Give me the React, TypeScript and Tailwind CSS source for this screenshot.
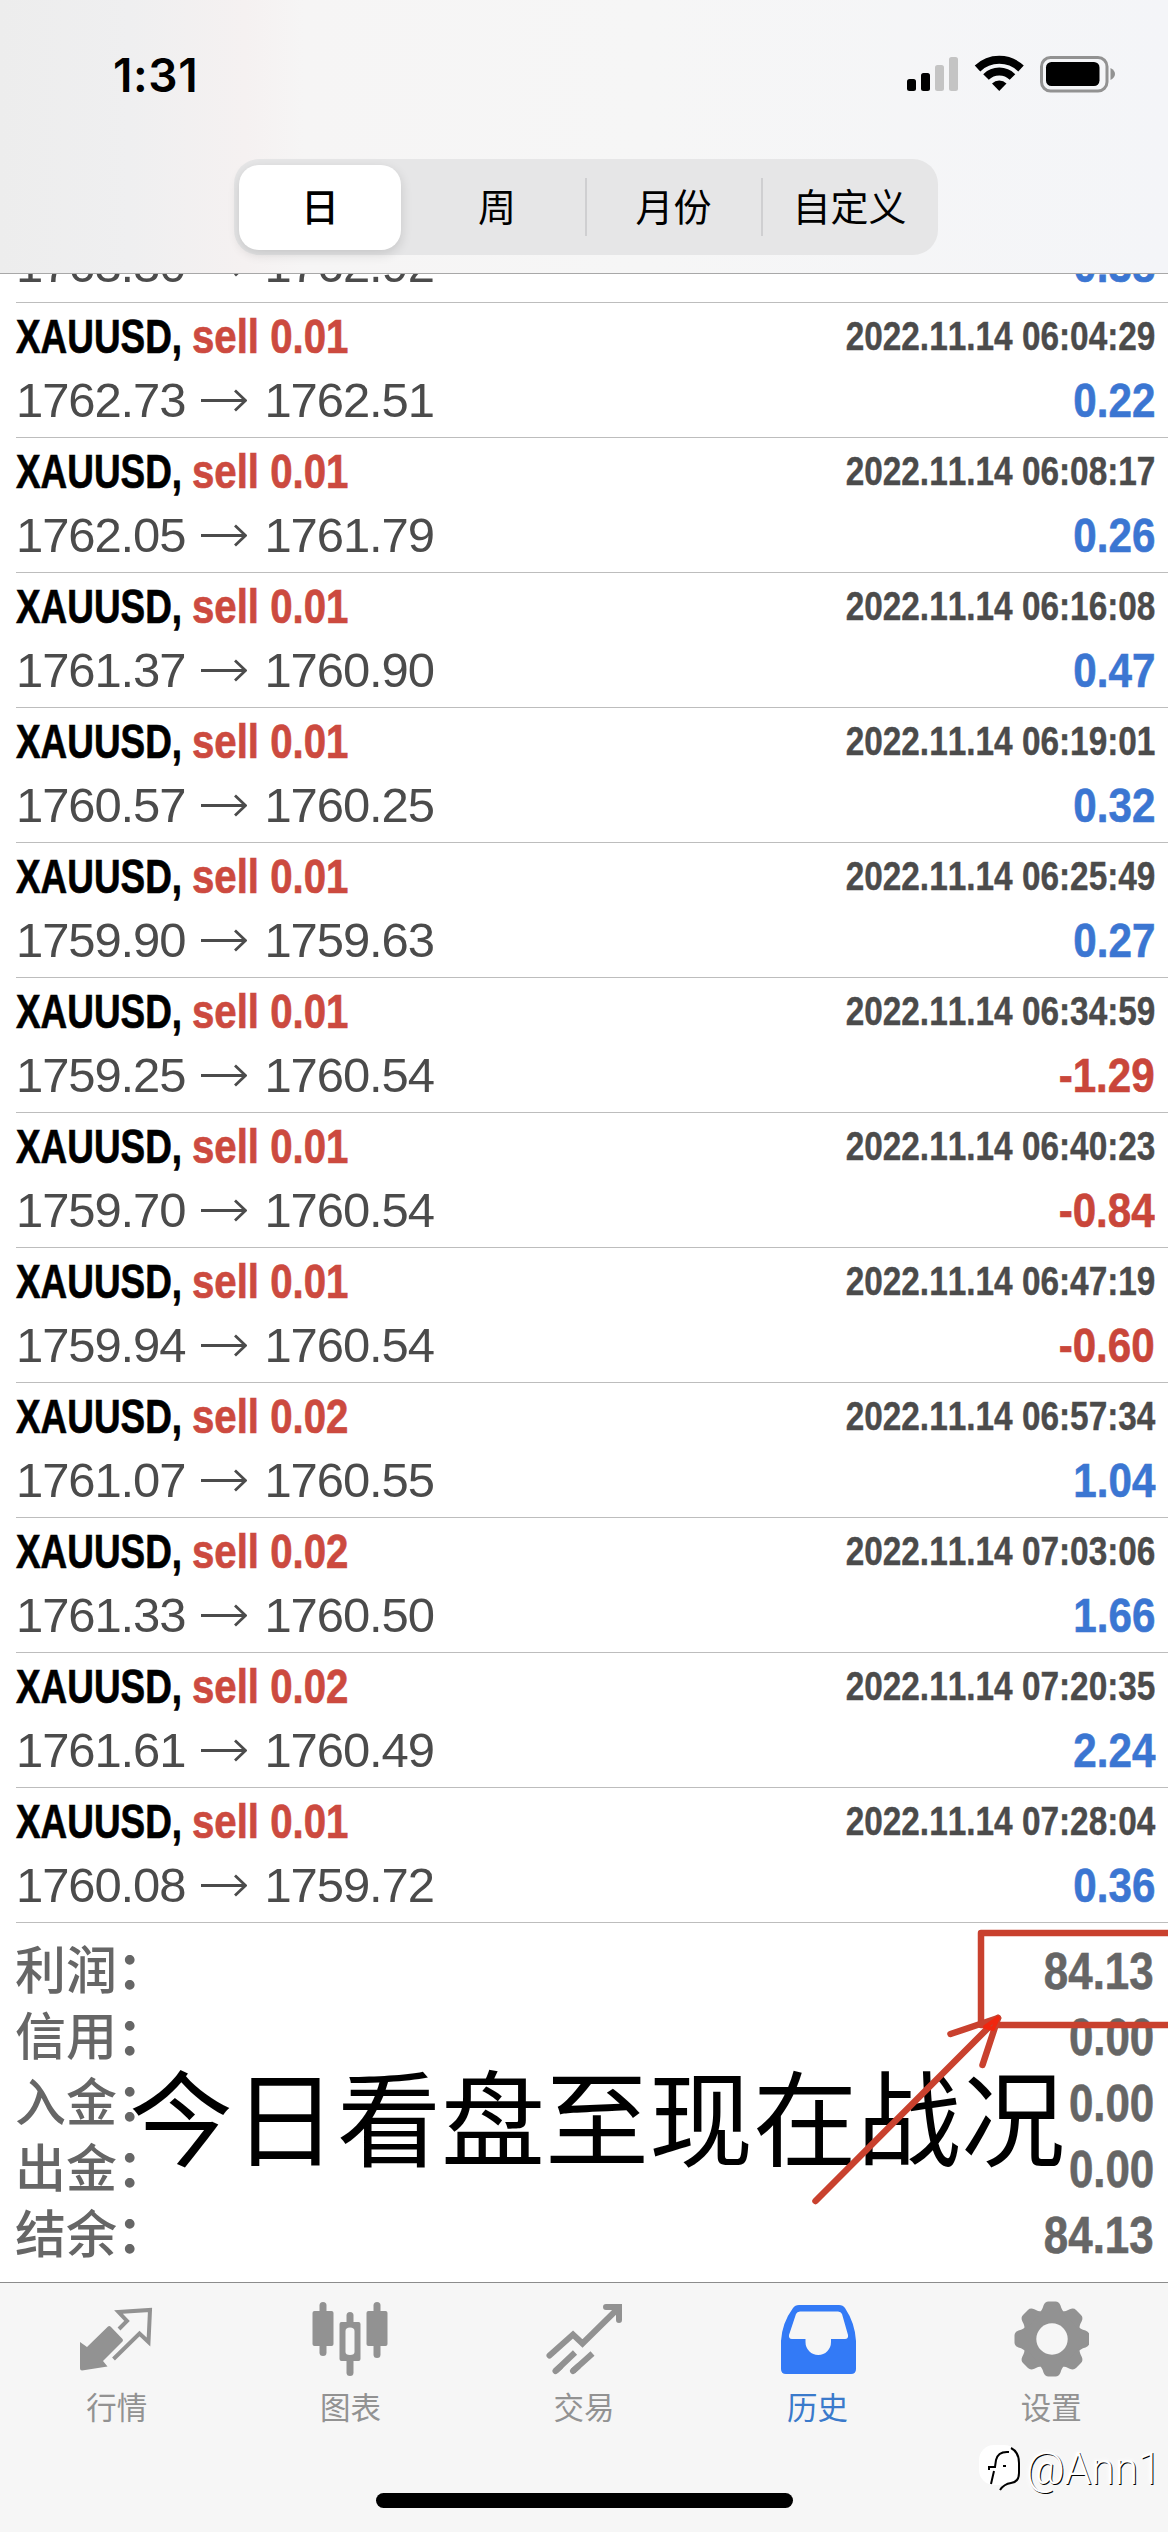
import React from "react";

interface IDeal {
  volume: string;
  open: string;
  close: string;
  time: string;
  profit: string;
}

const deals: IDeal[] = [
  { volume: "0.01", open: "1763.30", close: "1762.92", time: "2022.11.14 06:01:12", profit: "0.38" },
  { volume: "0.01", open: "1762.73", close: "1762.51", time: "2022.11.14 06:04:29", profit: "0.22" },
  { volume: "0.01", open: "1762.05", close: "1761.79", time: "2022.11.14 06:08:17", profit: "0.26" },
  { volume: "0.01", open: "1761.37", close: "1760.90", time: "2022.11.14 06:16:08", profit: "0.47" },
  { volume: "0.01", open: "1760.57", close: "1760.25", time: "2022.11.14 06:19:01", profit: "0.32" },
  { volume: "0.01", open: "1759.90", close: "1759.63", time: "2022.11.14 06:25:49", profit: "0.27" },
  { volume: "0.01", open: "1759.25", close: "1760.54", time: "2022.11.14 06:34:59", profit: "-1.29" },
  { volume: "0.01", open: "1759.70", close: "1760.54", time: "2022.11.14 06:40:23", profit: "-0.84" },
  { volume: "0.01", open: "1759.94", close: "1760.54", time: "2022.11.14 06:47:19", profit: "-0.60" },
  { volume: "0.02", open: "1761.07", close: "1760.55", time: "2022.11.14 06:57:34", profit: "1.04" },
  { volume: "0.02", open: "1761.33", close: "1760.50", time: "2022.11.14 07:03:06", profit: "1.66" },
  { volume: "0.02", open: "1761.61", close: "1760.49", time: "2022.11.14 07:20:35", profit: "2.24" },
  { volume: "0.01", open: "1760.08", close: "1759.72", time: "2022.11.14 07:28:04", profit: "0.36" },
];

const summary = [
  { label: "利润", value: "84.13" },
  { label: "信用", value: "0.00" },
  { label: "入金", value: "0.00" },
  { label: "出金", value: "0.00" },
  { label: "结余", value: "84.13" },
];

const StatusBar = () => (
  <div className="flex h-[148px] items-start justify-between pl-[113px] pr-[52px] pt-[47px]">
    <span className="font-['Inter'] text-[46px] font-semibold leading-[56px] tracking-[0.6px]">1:31</span>
    <svg className="mt-[6px]" width="210" height="42" viewBox="906 53 210 42">
      <rect x="907" y="79" width="9" height="12" rx="2.5" />
      <rect x="921" y="73" width="9" height="18" rx="2.5" />
      <rect x="935" y="65" width="9" height="26" rx="2.5" fill="#c4c4c4" />
      <rect x="949" y="57" width="9" height="34" rx="2.5" fill="#c4c4c4" />
      <g fill="none" stroke="#000" strokeWidth="8">
        <path d="M977.5 68.5 A31.5 31.5 0 0 1 1021 68.5" />
        <path d="M986 77 A19 19 0 0 1 1012.500 77" />
      </g>
      <path d="M992 83.500 A10.500 10.500 0 0 1 1006.500 83.500 L999.250 91 Z" />
      <rect x="1041.500" y="57.500" width="65.500" height="33.500" rx="9" fill="none" stroke="#929292" strokeWidth="3" />
      <rect x="1046" y="62" width="53.500" height="24" rx="5.500" />
      <path d="M1110.500 68 Q1115 70.500 1115 74 Q1115 77.500 1110.500 80 Z" fill="#929292" />
    </svg>
  </div>
);

const PeriodTabs = () => (
  <div className="ml-[234px] mt-[11px] h-24 w-[704px] rounded-[25px] bg-[#e6e6e7]">
    <div className="grid h-full grid-cols-4 items-center text-center text-[38px] leading-[56px]">
      <div className="ml-[5px] flex h-[85px] w-[162px] items-center justify-center rounded-[20px] bg-white pt-[2px] font-medium shadow-[0_4px_12px_rgba(0,0,0,0.14)]">
        日
      </div>
      <div className="pr-[2px] pt-[2px]">周</div>
      <div className="-ml-px border-l-2 border-[#cfcfd1] pr-[2px] pt-[2px]">月份</div>
      <div className="-ml-px border-l-2 border-[#cfcfd1] pr-[2px] pt-[2px]">自定义</div>
    </div>
  </div>
);

const PriceArrow = () => (
  <svg className="ml-[16px] mr-[17px]" width="46" height="24" viewBox="0 0 46 24" fill="none" stroke="#4b4b4b" strokeWidth="2.8">
    <path d="M0 12.500 H44 M34 2.500 L44.500 12.500 L34 22.500" />
  </svg>
);

const DealRow = ({ deal }: { deal: IDeal }) => {
  const isLoss = deal.profit.startsWith("-");
  return (
    <div className="ml-4 h-[135px] shrink-0 border-b border-[#bdbdbd] pr-[13px] pt-[5px]">
      <div className="flex h-[56px] items-center justify-between">
        <div className="flex text-[49px] font-bold leading-[56px] [-webkit-text-stroke:0.7px]">
          <span className="w-[176px] origin-left scale-x-[0.753] whitespace-nowrap text-black">XAUUSD,</span>
          <span className="origin-left scale-x-[0.82] whitespace-nowrap text-[#cc4a3f]">sell {deal.volume}</span>
        </div>
        <span className="origin-right scale-x-[0.834] whitespace-nowrap text-[40px] font-bold leading-[56px] text-[#4b4b4b] [-webkit-text-stroke:0.4px]">
          {deal.time}
        </span>
      </div>
      <div className="mt-[6px] flex h-[60px] items-center justify-between text-[49px] leading-[60px]">
        <div className="flex items-center tracking-[-1.1px] text-[#4b4b4b]">
          {deal.open}
          <PriceArrow />
          {deal.close}
        </div>
        <span
          className={`origin-right scale-x-[0.86] font-bold [-webkit-text-stroke:0.6px] ${isLoss ? "text-[#c9463a]" : "text-[#3b76d2]"}`}
        >
          {deal.profit}
        </span>
      </div>
    </div>
  );
};

const Summary = () => (
  <div className="h-[359px] pl-[15px] pr-[14px] pt-[16px] text-[#666]">
    {summary.map((item) => (
      <div key={item.label} className="flex h-[66px] items-center justify-between">
        <span className="text-[51px] font-medium leading-[66px]">
          {item.label}
          <span className="font-bold">：</span>
        </span>
        <span className="origin-right scale-x-[0.86] text-[51px] font-bold leading-[66px] [-webkit-text-stroke:0.6px]">
          {item.value}
        </span>
      </div>
    ))}
  </div>
);

// hand-drawn marks on top of the totals
const Annotation = () => (
  <div className="pointer-events-none absolute inset-x-0 top-[1923px] h-[359px]">
    <div className="absolute left-[129px] top-[125px] whitespace-nowrap text-[104px] leading-[150px] text-black">
      今日看盘至现在战况
    </div>
    <svg
      className="absolute left-0 top-0"
      width="1168"
      height="359"
      viewBox="0 1923 1168 359"
      fill="none"
      stroke="#c9412e"
      strokeWidth="6.5"
      strokeLinecap="round"
      strokeLinejoin="round"
    >
      <path d="M1172 1933 H981 V2025 H1172" />
      <path d="M815.500 2201 L998 2018" />
      <path d="M950.500 2034 L998 2018 L982.500 2065" />
      <path d="M985 2027 L998 2018 L993 2029 Z" stroke="#f0260f" strokeWidth="4" />
    </svg>
  </div>
);

const QuotesIcon = () => (
  <svg width="76" height="76" viewBox="79 2301 76 76">
    <path
      d="M80 2342 L87 2347 L108 2326.500 Q109.500 2325.500 111 2327 L122.500 2339 Q123.500 2340 122.500 2341.500 L103 2361 L107.500 2366.500 L82 2370.500 Q80 2370.500 80 2368.500 Z"
      fill="#929292"
    />
    <path
      d="M119 2329 L127 2321 L118.500 2312 L150 2310 L148.500 2342 L139.500 2333.500 L113.500 2359"
      fill="none"
      stroke="#929292"
      strokeWidth="4"
    />
  </svg>
);

const ChartsIcon = () => (
  <svg width="76" height="76" viewBox="312.500 2301 76 76" fill="#929292">
    <rect x="313" y="2311" width="21" height="35" rx="2" />
    <rect x="320" y="2302" width="7" height="54" rx="3.500" />
    <path fillRule="evenodd" d="M342 2322 H359 Q361 2322 361 2324 V2359 Q361 2361 359 2361 H342 Q340 2361 340 2359 V2324 Q340 2322 342 2322 Z M350.500 2327.500 Q346 2327.500 346 2331 V2352 Q346 2355 350.500 2355 Q355 2355 355 2352 V2331 Q355 2327.500 350.500 2327.500 Z" />
    <rect x="347" y="2312" width="7" height="14" rx="3.500" />
    <rect x="347" y="2356" width="7" height="20" rx="3.500" />
    <rect x="367" y="2311" width="21" height="35" rx="2" />
    <rect x="374" y="2302" width="7" height="56" rx="3.500" />
  </svg>
);

const TradeIcon = () => (
  <svg width="76" height="76" viewBox="546 2301 76 76" fill="none" stroke="#929292" strokeWidth="6" strokeLinecap="round">
    <path d="M549.500 2355.500 L573 2334.500 L582.500 2343.500 L618 2308.500" />
    <path d="M606 2307 H619 V2320" />
    <path d="M555.500 2371 L575 2352.500 M573 2371 L592.500 2353.500" strokeLinecap="butt" />
    <path d="M555.500 2371 L560 2367 M573 2371 L578 2366.500" />
  </svg>
);

const HistoryIcon = () => (
  <svg width="76" height="76" viewBox="780 2301 76 76">
    <path
      d="M799 2305 H839 Q843 2305 845 2308 Q855 2323 856 2341 V2369 Q856 2374 851 2374 H786 Q781 2374 781 2369 V2341 Q782 2323 793 2308 Q795 2305 799 2305 Z"
      fill="#337af6"
    />
    <path
      d="M800 2311.500 H838 Q841 2311.500 842 2314 L848 2335 Q848.500 2339 845 2339 H831 V2342 A12.700 13 0 0 1 805.500 2342 V2339 H792 Q788.500 2339 789 2335 L796 2314 Q797 2311.500 800 2311.500 Z"
      fill="#f6f6f6"
    />
  </svg>
);

const SettingsIcon = () => (
  <svg width="76" height="76" viewBox="-39 -38 76 76">
    <g fill="#929292">
      <circle r="29" />
      {[0, 45, 90, 135, 180, 225, 270, 315].map((deg) => (
        <path key={deg} transform={`rotate(${deg})`} d="M-13 -26 Q-10 -28 -8.500 -33.500 Q-7 -37.500 -3.500 -37.500 H3.500 Q7 -37.500 8.500 -33.500 Q10 -28 13 -26 Z" />
      ))}
    </g>
    <circle r="15.700" fill="#f6f6f6" />
  </svg>
);

const tabs = [
  { label: "行情", Icon: QuotesIcon },
  { label: "图表", Icon: ChartsIcon },
  { label: "交易", Icon: TradeIcon },
  { label: "历史", Icon: HistoryIcon, active: true },
  { label: "设置", Icon: SettingsIcon },
];

const TabBar = () => (
  <div className="relative h-[250px] border-t border-[#8c8c8c] bg-[#f6f6f6]">
    <div className="grid grid-cols-5 pt-[18px]">
      {tabs.map(({ label, Icon, active }) => (
        <div key={label} className="flex flex-col items-center">
          <Icon />
          <span className={`mt-[11px] text-[30.5px] leading-[40px] ${active ? "text-[#3a7acb]" : "text-[#929292]"}`}>
            {label}
          </span>
        </div>
      ))}
    </div>
    <div className="mx-auto mt-[65px] h-[15px] w-[417px] rounded-full bg-black" />
    <div className="absolute left-[978px] top-[158px] flex items-center">
      <svg width="48" height="56" viewBox="0 0 48 56" fill="none">
        <rect x="1" y="4" width="40" height="40" rx="15" fill="#fff" />
        <path d="M33 7 Q41 11 41 22 V32 Q41 41 33 42 Q26 43 22 49" stroke="#000" strokeWidth="2" />
        <path d="M31 11 Q20 10 18 19 L17 26 H11 V29 M16 30 L13 43 M25 25 H28" stroke="#000" strokeWidth="2" />
      </svg>
      <span className="origin-left scale-x-[0.965] font-['Roboto'] text-[44px] font-light leading-[56px] text-white [text-shadow:1px_1px_0_#000,0_0_5px_#fff]">
        @Ann1
      </span>
    </div>
  </div>
);

const App = () => {
  return (
    <div className="relative h-[2532px] w-[1168px] overflow-hidden bg-white font-['Liberation_Sans','Noto_Sans_CJK_SC',sans-serif] text-black [font-kerning:none]">
      <div className="h-[274px] border-b border-[#a8a8a8] bg-[linear-gradient(to_right,#ededed_0%,#efeff0_11%,#f5f1f1_21%,#f6f5f5_26%,#f6f6f6_55%,#f4f5f8_100%)]">
        <StatusBar />
        <PeriodTabs />
      </div>
      {/* list is scrolled, the first deal sits partly under the header */}
      <div className="flex h-[1649px] flex-col justify-end overflow-hidden">
        {deals.map((deal) => (
          <DealRow key={deal.time} deal={deal} />
        ))}
      </div>
      <Summary />
      <TabBar />
      <Annotation />
    </div>
  );
};

export default App;
